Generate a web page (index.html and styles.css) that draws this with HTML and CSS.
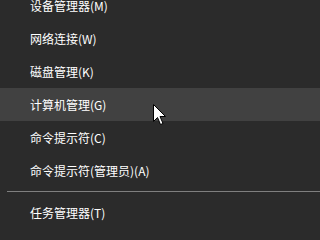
FILE: index.html
```html
<!DOCTYPE html>
<html lang="zh-CN">
<head>
<meta charset="utf-8">
<link rel="stylesheet" href="styles.css">
</head>
<body>
<div class="menu">
  <ul class="list">
    <li class="item">设备管理器(M)</li>
    <li class="item">网络连接(W)</li>
    <li class="item">磁盘管理(K)</li>
    <li class="item hover">计算机管理(G)</li>
    <li class="item">命令提示符(C)</li>
    <li class="item">命令提示符(管理员)(A)</li>
  </ul>
  <div class="sep"></div>
  <ul class="list">
    <li class="item">任务管理器(T)</li>
  </ul>
  <svg class="cursor" width="14" height="22" viewBox="0 0 14 22">
    <path d="M0.5 0.5 L0.5 17.5 L4.5 13.5 L7.5 20.5 L10 19.5 L7 12.5 L12.5 12.5 Z" fill="#fff" stroke="#000" stroke-width="1" stroke-linejoin="miter"/>
  </svg>
</div>
</body>
</html>
```
FILE: styles.css
```css
html, body {
  margin: 0;
  padding: 0;
  background: #2b2b2b;
  overflow: hidden;
}
.menu {
  position: relative;
  height: 228px;
  overflow: hidden;
  background: #2b2b2b;
  font-family: "Noto Sans CJK SC", "Microsoft YaHei", sans-serif;
  font-size: 12px;
  color: #ffffff;
}
.list {
  list-style: none;
  margin: 0;
  padding: 0;
}
.list:first-child {
  margin-top: -11px;
}
.item {
  height: 33px;
  line-height: 33px;
  padding-left: 30px;
  white-space: nowrap;
}
.hover {
  background: #414141;
}
.sep {
  height: 1px;
  margin: 4px 0 4px 7px;
  background: #7f7f7f;
}
.cursor {
  position: absolute;
  left: 153px;
  top: 104px;
}
```
